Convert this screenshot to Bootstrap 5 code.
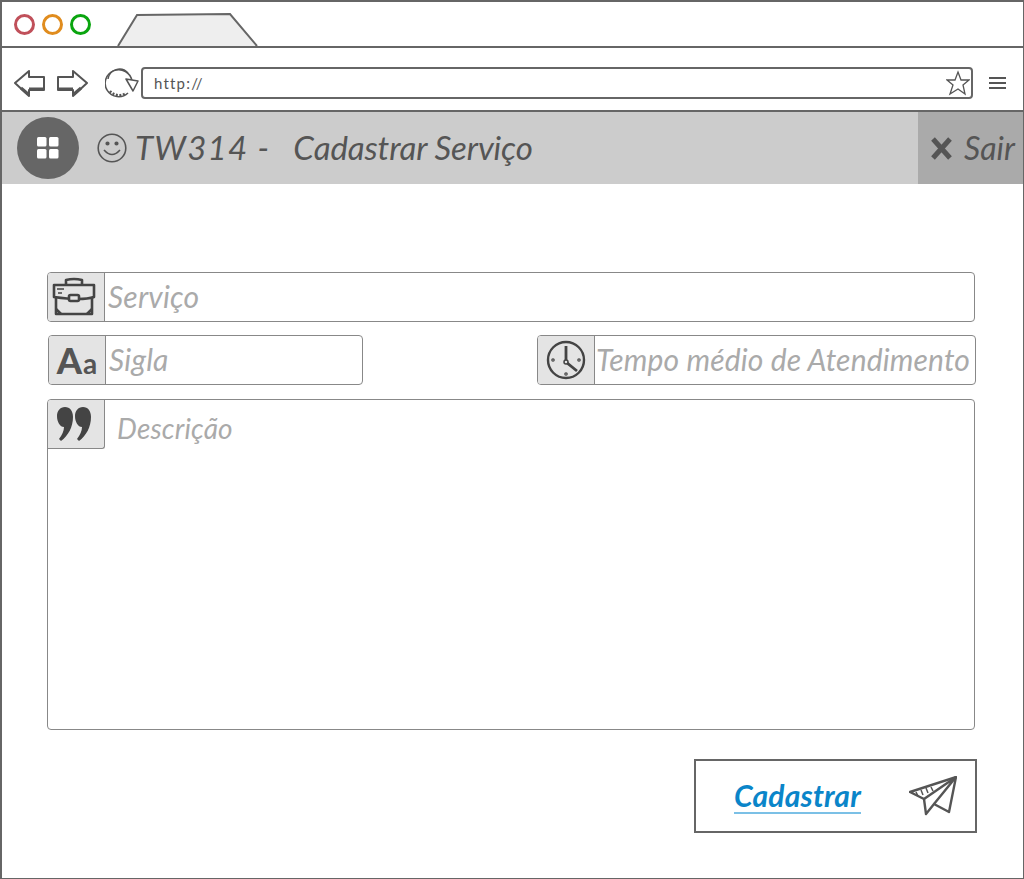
<!doctype html>
<html lang="pt-BR">
  <head>
    <meta charset="UTF-8" />
    <title>TW314 - Cadastrar Serviço</title>
    <link href="https://cdn.jsdelivr.net/npm/bootstrap@5.3.0/dist/css/bootstrap.min.css" rel="stylesheet" />
    <style>
      body { background: #fff; font-family: "Lato", "Liberation Sans", sans-serif; font-style: italic; color: #555; }
      .frame { width: 1024px; height: 879px; border: solid #666; border-width: 2px 1px 1px 2px; overflow: hidden; }
      .tabstrip { height: 46px; border-bottom: 2px solid #666; padding-left: 12px; gap: 7px; }
      .dot { width: 21px; height: 21px; border-radius: 50%; border: 3px solid; margin-top: 1px; }
      .dot-red { border-color: #c0505a; }
      .dot-orange { border-color: #e08c1e; }
      .dot-green { border-color: #0aa50f; }
      .tabshape { margin: 12px 0 0 19px; }
      .toolbar { height: 64px; border-bottom: 2px solid #666; padding: 8px 0 0 12px; }
      .fwd { margin-left: 10px; }
      .reload { margin-left: 17px; }
      .urlbox { width: 832px; height: 32px; border: 2px solid #666; border-radius: 4px; margin-left: 2px; padding: 0 1px 0 11px; font-size: 15px; font-style: normal; letter-spacing: 1.200px; }
      .burger { margin-left: 16px; }
      .appbar { height: 72px; background: #ccc; padding-left: 15px; }
      .applogo { width: 62px; height: 62px; border-radius: 50%; background: #666; }
      .smile { margin-left: 18px; }
      .apptitle { font-size: 33px; color: #555; margin-left: 8px; white-space: nowrap; letter-spacing: -.1px; }
      .appname { margin-right: 23px; letter-spacing: 1.300px; }
      .leavebox { width: 105px; height: 72px; background: #aaa; padding-left: 12px; gap: 11px; font-size: 32px; }
      .formarea { padding: 88px 48px 0 45px; }
      .field { height: 50px; border: 1px solid #888; border-radius: 4px; margin-bottom: 13px; }
      .field-row { margin-bottom: 14px; }
      .field-row .field { margin-bottom: 0; }
      .addon { width: 57px; height: 100%; background: #e4e4e4; border-right: 1px solid #888; border-radius: 3px 0 0 3px; flex-shrink: 0; color: #555; font-style: normal; }
      .hint { color: #aaa; font-size: 30px; padding: 0 0 2px 3px; white-space: nowrap; letter-spacing: .2px; }
      .field-short { width: 315px; margin-left: 1px; }
      .field-long { width: 439px; margin-right: -1px; }
      .field-long .hint { padding-left: 1px; letter-spacing: .15px; }
      .field-area { height: 331px; margin-bottom: 29px; }
      .field-area .addon { height: 49px; border-bottom: 1px solid #888; border-radius: 3px 0 3px 0; }
      .field-area .hint { padding: 7px 0 0 12px; font-size: 28px; letter-spacing: .15px; }
      .aa-big { font-size: 36px; font-weight: 900; line-height: 1; }
      .aa-small { font-size: 28px; font-weight: 700; margin-left: 1px; line-height: 1; align-self: center; padding-top: 6px; }
      .sendbox { width: 283px; height: 74px; border: 2px solid #666; margin-right: -2px; padding: 0 18px 0 38px; }
      .sendlabel { color: #0a85c9; font-size: 30px; font-weight: 700; letter-spacing: .2px; border-bottom: 2px solid #7bc0e6; line-height: 1.1; }
      .case { margin-right: 4px; }
    </style>
  </head>
  <body class="m-0">
    <div class="frame">
      <div class="tabstrip d-flex align-items-center">
        <span class="dot dot-red"></span>
        <span class="dot dot-orange"></span>
        <span class="dot dot-green"></span>
        <svg class="tabshape" width="142" height="34" viewBox="0 0 142 34"><path d="M1 33 L20 2 L113 1 L140 33" fill="#eee" stroke="#666" stroke-width="2" /></svg>
      </div>

      <div class="toolbar d-flex align-items-center">
        <svg width="32" height="28" viewBox="0 0 32 28" fill="none" stroke="#555" stroke-width="2" stroke-linejoin="round">
          <path d="M1 14 L15 2 V8 H30 V21 H15 V27 Z" />
          <path d="M7 19 L14 25 M15 20 H30" stroke-width="3" />
        </svg>
        <svg class="fwd" width="32" height="28" viewBox="0 0 32 28" fill="none" stroke="#555" stroke-width="2" stroke-linejoin="round">
          <path d="M31 14 L17 2 V8 H2 V21 H17 V27 Z" />
          <path d="M25 19 L18 25 M2 20 H17" stroke-width="3" />
        </svg>
        <svg class="reload" width="34" height="30" viewBox="0 0 34 30" fill="none" stroke="#555" stroke-width="1.500" stroke-linejoin="round">
          <path d="M27 13 A13.500 13.500 0 1 0 23 25" />
          <path d="M23 5 A11.500 11.500 0 0 0 3 11" />
          <path d="M5 23 A12 12 0 0 0 21 25" stroke-dasharray="2 1.500" stroke-width="2.400" />
          <path d="M21 11 L33 13 L28 23 Z" fill="#fff" />
        </svg>
        <div class="urlbox d-flex align-items-center justify-content-between">
          <span>http://</span>
          <svg width="24" height="26" viewBox="0 0 24 26" fill="#fff" stroke="#555" stroke-width="1.300"><path d="M12 2 L15 10 H23 L17 15 L19 24 L12 19 L4 24 L7 15 L1 10 H9 Z" /></svg>
        </div>
        <svg class="burger" width="17" height="14" viewBox="0 0 17 14" stroke="#555" stroke-width="2"><path d="M0 2 H17 M0 7 H17 M0 12 H17" /></svg>
      </div>

      <div class="appbar d-flex align-items-center">
        <div class="applogo d-flex align-items-center justify-content-center">
          <svg width="22" height="22" viewBox="0 0 22 22" fill="#fff"><rect x="0" y="0" width="9.500" height="9.500" rx="1.500" /><rect x="12" y="0" width="9.500" height="9.500" rx="1.500" /><rect x="0" y="12" width="9.500" height="9.500" rx="1.500" /><rect x="12" y="12" width="9.500" height="9.500" rx="1.500" /></svg>
        </div>
        <svg class="smile" width="30" height="30" viewBox="0 0 30 30" fill="none" stroke="#555" stroke-width="1.600"><circle cx="15" cy="15" r="13.800" /><path d="M7 17 Q15 26 23 17" /><circle cx="10.500" cy="10.500" r="1.300" fill="#555" /><circle cx="19.500" cy="10.500" r="1.300" fill="#555" /></svg>
        <div class="apptitle flex-grow-1"><span class="appname">TW314 -</span>Cadastrar Serviço</div>
        <div class="leavebox d-flex align-items-center">
          <svg width="23" height="25" viewBox="0 0 23 25" fill="none" stroke="#555" stroke-width="5"><path d="M3 3 L20 22 M20 3 L3 22" /></svg>
          <span>Sair</span>
        </div>
      </div>

      <div class="formarea">
        <div class="field d-flex">
          <div class="addon d-flex align-items-center justify-content-center">
            <svg class="case" width="44" height="40" viewBox="0 0 44 40" fill="none" stroke="#444" stroke-width="2.600" stroke-linejoin="round">
              <path d="M14 8 V3 Q22 1 30 3 V8" />
              <path d="M2 8 H42 V20 Q30 24 2 20 Z" />
              <path d="M4 21 V37 H40 V21" />
              <rect x="17" y="18" width="10" height="6" rx="1.500" fill="#e4e4e4" />
              <path d="M4 32 L9 37 M40 32 L35 37" />
              <path d="M5 12 H12 M6 16 H10" stroke-width="1.500" />
            </svg>
          </div>
          <div class="hint d-flex align-items-center">Serviço</div>
        </div>

        <div class="field-row d-flex justify-content-between">
          <div class="field field-short d-flex">
            <div class="addon d-flex align-items-center justify-content-center"><span class="aa-big">A</span><span class="aa-small">a</span></div>
            <div class="hint d-flex align-items-center">Sigla</div>
          </div>
          <div class="field field-long d-flex">
            <div class="addon d-flex align-items-center justify-content-center">
              <svg width="40" height="40" viewBox="0 0 40 40" fill="none" stroke="#444" stroke-width="2.400">
                <circle cx="20" cy="20" r="18" />
                <path d="M20 6 V22 L31 31" stroke-width="2.800" />
                <circle cx="20" cy="22" r="2" fill="#e4e4e4" stroke-width="1.500" />
                <circle cx="33" cy="20" r=".6" /><circle cx="7" cy="20" r=".6" /><circle cx="20" cy="34" r=".6" />
              </svg>
            </div>
            <div class="hint d-flex align-items-center">Tempo médio de Atendimento</div>
          </div>
        </div>

        <div class="field field-area d-flex align-items-start">
          <div class="addon d-flex align-items-center justify-content-center">
            <svg class="case" width="36" height="36" viewBox="0 0 36 36" fill="#444">
              <path d="M9 1 C14 1 17 5 17 11 C17 21 12 30 5 35 L3 33 C6 29 8 25 8 21 C4 21 1 16 1 10 C1 5 4 1 9 1 Z" />
              <path d="M27 1 C32 1 35 5 35 11 C35 21 30 30 23 35 L21 33 C24 29 26 25 26 21 C22 21 19 16 19 10 C19 5 22 1 27 1 Z" />
            </svg>
          </div>
          <div class="hint">Descrição</div>
        </div>

        <div class="d-flex justify-content-end">
          <div class="sendbox d-flex align-items-center justify-content-between">
            <span class="sendlabel">Cadastrar</span>
            <svg width="48" height="40" viewBox="0 0 48 40" fill="none" stroke="#555" stroke-width="2.400" stroke-linejoin="round">
              <path d="M1 16 L47 1 L40 36 L25 28 L17 38 L15 23 Z" />
              <path d="M47 1 L15 23 M47 1 L25 28" />
              <path d="M7 16 L9 20 M12 14 L14 19 M17 12 L19 17 M22 11 L24 15" stroke-width="1.500" />
            </svg>
          </div>
        </div>
      </div>
    </div>
    <script src="https://cdn.jsdelivr.net/npm/bootstrap@5.3.0/dist/js/bootstrap.bundle.min.js"></script>
  </body>
</html>
